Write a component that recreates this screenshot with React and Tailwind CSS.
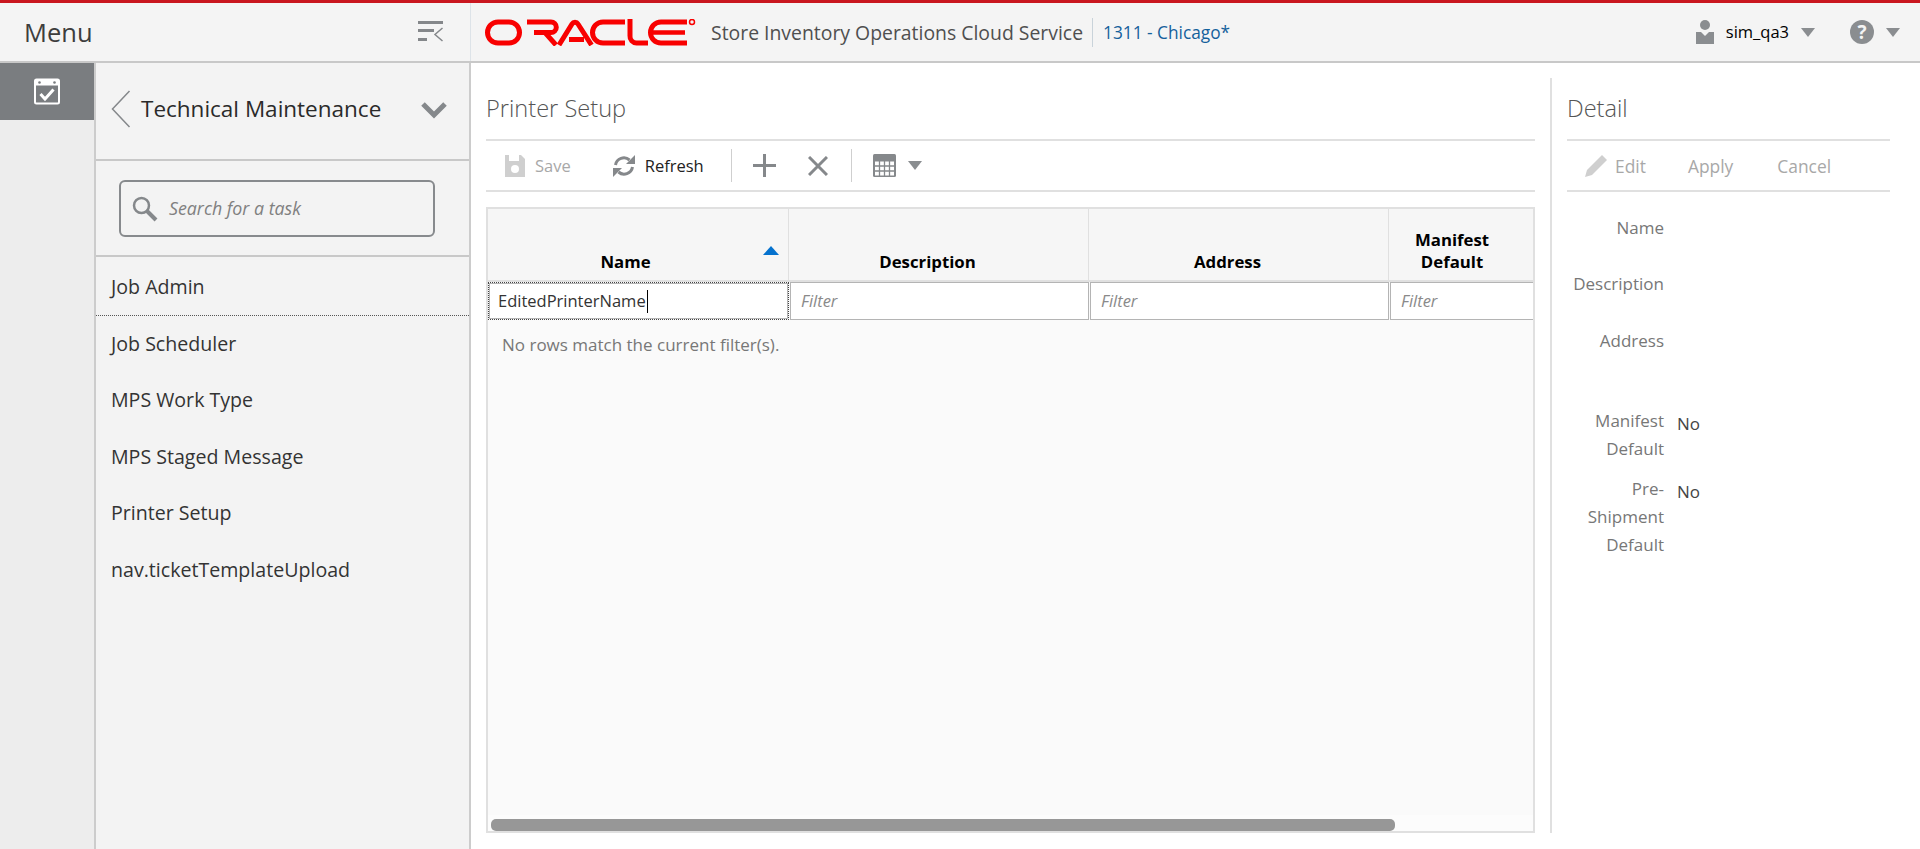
import React from 'react';

const navItems = ['Job Scheduler', 'MPS Work Type', 'MPS Staged Message', 'Printer Setup', 'nav.ticketTemplateUpload'];

const OracleLogo = () => (
    <svg width="211" height="27" viewBox="6 7 211 27" fill="none" stroke="#f80000" strokeWidth="5">
        <rect x="8.500" y="10" width="32" height="21" rx="10.500" />
        <path d="M48 10H72a5.300 5.300 0 0 1 0 10.600H55M66 20.600L77 33" />
        <path d="M80 33L93 12a3.500 3.500 0 0 1 6 0L112.500 33M90 27.500H105" />
        <path d="M146 10h-22a10.500 10.500 0 0 0 0 21h22" />
        <path d="M151 7v17a6.500 6.500 0 0 0 6.500 7H169" />
        <path d="M208 10h-26a10.500 10.500 0 0 0 0 21h26" />
        <path d="M174 20.500h32" strokeWidth="4.500" />
        <circle cx="213" cy="10" r="2.500" strokeWidth="1.500" />
    </svg>
);

const Caret = ({ className = 'w-[14px] h-[9px]', fill = '#8a8d90' }) => (
    <svg className={className} viewBox="0 0 14 9" fill={fill}>
        <path d="M0 0h14L7 9z" />
    </svg>
);

const App = () => {
    return (
        <div className="flex flex-col h-screen w-full overflow-hidden bg-white font-['Open_Sans',sans-serif]">
            <div className="h-[3px] bg-[#c9161f]" />
            <div className="flex h-[60px] bg-[#f4f4f4] border-b-2 border-[#c8c8c8]">
                <div className="flex w-[471px] items-center justify-between border-r border-[#dde3e8] pl-[24px] pr-[26px]">
                    <span className="pt-px text-[25.500px] text-[#3d3d3d]">Menu</span>
                    <svg width="26" height="24" viewBox="0 0 26 24" fill="#84878a">
                        <rect x="0" y="1" width="25" height="3" />
                        <rect x="0" y="9" width="16" height="3" />
                        <rect x="0" y="18" width="9" height="3" />
                        <path d="M24.500 8L17 14.500L24.500 21" fill="none" stroke="#84878a" strokeWidth="1.500" />
                    </svg>
                </div>
                <div className="flex flex-1 items-center pl-[14px] pr-[20px]">
                    <OracleLogo />
                    <span className="ml-[15px] pt-px text-[19.400px] text-[#4f4f4f]">Store Inventory Operations Cloud Service</span>
                    <div className="ml-[9px] h-[29px] w-px bg-[#c9d3da]" />
                    <span className="ml-[10px] pt-px text-[17.300px] text-[#14619c]">1311 - Chicago*</span>
                    <div className="flex-1" />
                    <svg width="18" height="24" viewBox="0 0 18 24" fill="#8a8d90">
                        <circle cx="9" cy="5" r="5" />
                        <path d="M0 12h5l4 4 4-4h5v12H0z" />
                    </svg>
                    <span className="ml-[12px] pt-px text-[16.500px] text-black">sim_qa3</span>
                    <Caret className="ml-[12px] w-[14px] h-[9px]" />
                    <span className="ml-[35px] flex h-[24px] w-[24px] items-center justify-center rounded-full bg-[#8a8d90] text-[19px] leading-none font-bold text-[#f4f4f4]">?</span>
                    <Caret className="ml-[12px] w-[14px] h-[9px]" />
                </div>
            </div>

            <div className="flex flex-1 min-h-0">
                <div className="w-[96px] shrink-0 bg-[#ededed] border-r-2 border-[#cccccc] box-border">
                    <div className="flex h-[57px] justify-center bg-[#7a7d80] pt-[15px]">
                        <svg width="26" height="27" viewBox="0 0 26 27" fill="none">
                            <rect x="1" y="1.500" width="24" height="24" rx="1.500" stroke="#fff" strokeWidth="2" />
                            <rect x="1" y="1.500" width="24" height="6" fill="#fff" />
                            <circle cx="5.500" cy="4.500" r="1.300" fill="#7a7d80" />
                            <circle cx="20.500" cy="4.500" r="1.300" fill="#7a7d80" />
                            <path d="M6.500 16l4.500 5 8.500-9.500" stroke="#fff" strokeWidth="3" />
                        </svg>
                    </div>
                </div>

                <div className="w-[375px] shrink-0 bg-[#f3f3f3] border-r-2 border-[#cccccc]">
                    <div className="relative flex h-[98px] items-center border-b-2 border-[#c8c8c8] pb-[4px]">
                        <svg className="ml-[15px]" width="20" height="38" viewBox="0 0 20 38" fill="none" stroke="#85888b" strokeWidth="1.500">
                            <path d="M18.500 1L1.500 19l17 18" />
                        </svg>
                        <span className="ml-[10px] text-[22.500px] text-[#2a2a2a]">Technical Maintenance</span>
                        <svg className="absolute left-[325px] top-[39px]" width="26" height="17" viewBox="0 0 26 17" fill="none" stroke="#85888b" strokeWidth="5">
                            <path d="M2 2l11 11L24 2" />
                        </svg>
                    </div>
                    <div className="border-b-2 border-[#c8c8c8] px-[23px] pt-[19px] pb-[18px]">
                        <div className="flex h-[57px] w-[316px] items-center rounded-[6px] border-2 border-[#878a8d] pl-[11px]">
                            <svg width="26" height="26" viewBox="0 0 26 26" fill="none" stroke="#85888b">
                                <circle cx="9.500" cy="9.500" r="7.500" strokeWidth="2.500" />
                                <path d="M15 15l9 9" strokeWidth="4" />
                            </svg>
                            <span className="ml-[11px] text-[17.800px] italic text-[#808080]">Search for a task</span>
                        </div>
                    </div>
                    <div className="flex h-[59px] items-center border-b border-dotted border-[#555555] pl-[15px] pt-px text-[19.600px] text-[#333333]">Job Admin</div>
                    {navItems.map((item) => (
                        <div key={item} className="flex h-[56.600px] items-center pb-[2px] pl-[15px] text-[19.600px] text-[#333333]">{item}</div>
                    ))}
                </div>

                <div className="flex flex-1 min-w-0 pl-[15px]">
                    <div className="mt-[15px] w-[1049px] shrink-0">
                        <div className="flex h-[63px] items-center border-b-2 border-[#e0e0e0] pt-px text-[23.600px] font-light text-[#555555]">Printer Setup</div>
                        <div className="flex h-[51px] items-center border-b-2 border-[#e0e0e0] text-[16.500px]">
                            <svg className="ml-[19px]" width="20" height="22" viewBox="0 0 20 22">
                                <path d="M0 0h16l4 4v18H0z" fill="#cfcfcf" />
                                <rect x="4" y="0" width="10" height="6" fill="#fff" />
                                <circle cx="10" cy="14" r="4" fill="#fff" />
                            </svg>
                            <span className="ml-[10px] pt-px text-[#a8a8a8]">Save</span>
                            <svg className="ml-[41px]" width="24" height="22" viewBox="0 0 24 22" fill="none" stroke="#85888b" strokeWidth="3">
                                <path d="M3.500 10a8.500 8.500 0 0 1 14-5" />
                                <path d="M20.500 12a8.500 8.500 0 0 1-14 5" />
                                <path d="M14 9h9V0z" fill="#85888b" stroke="none" />
                                <path d="M10 13H1v9z" fill="#85888b" stroke="none" />
                            </svg>
                            <span className="ml-[9px] pt-px text-[#222222]">Refresh</span>
                            <div className="ml-[27px] h-[33px] w-px bg-[#cfcfcf]" />
                            <svg className="ml-[21px]" width="23" height="23" viewBox="0 0 23 23" stroke="#85888b" strokeWidth="3">
                                <path d="M0 11.500h23M11.500 0v23" />
                            </svg>
                            <svg className="ml-[32px]" width="20" height="20" viewBox="0 0 20 20" stroke="#85888b" strokeWidth="3">
                                <path d="M1 1l18 18M19 1L1 19" />
                            </svg>
                            <div className="ml-[23px] h-[33px] w-px bg-[#cfcfcf]" />
                            <svg className="ml-[21px]" width="23" height="23" viewBox="0 0 23 23">
                                <rect width="23" height="23" rx="1.500" fill="#85888b" />
                                <path d="M2 7.500h19v14H2z" fill="#fff" />
                                <path d="M6.500 7v15M11.500 7v15M16.500 7v15M2 12h19M2 17h19" stroke="#85888b" strokeWidth="1.300" />
                            </svg>
                            <Caret className="ml-[12px] w-[14px] h-[9px]" />
                        </div>

                        <div className="mt-[15px] flex h-[626px] w-[1049px] flex-col border-2 border-[#e0e0e0] bg-[#fafafa]">
                            <div className="flex h-[71px] bg-[#f6f6f6] text-[16.800px] font-bold text-black">
                                <div className="relative flex w-[301px] items-end justify-center border-r border-[#e0e0e0] pb-[6px] pr-[25px]">
                                    Name
                                    <svg className="absolute right-[9px] top-[37px]" width="16" height="9" viewBox="0 0 16 9" fill="#0572ce">
                                        <path d="M8 0l8 9H0z" />
                                    </svg>
                                </div>
                                <div className="flex w-[300px] items-end justify-center border-r border-[#e0e0e0] pb-[6px] pr-[22px]">Description</div>
                                <div className="flex w-[300px] items-end justify-center border-r border-[#e0e0e0] pb-[6px] pr-[22px]">Address</div>
                                <div className="flex flex-1 items-end justify-center pb-[7px] pr-[18px] text-center leading-[22px]">Manifest<br />Default</div>
                            </div>
                            <div className="flex h-[41px] items-stretch border-t-2 border-[#e0e0e0] pb-px text-[16.500px] italic text-[#8a8a8a]">
                                <div className="mx-px my-px flex w-[299px] items-center border border-[#b4b4b4] bg-white outline-1 outline-dotted outline-[#444444] pl-[8px] not-italic text-[#333333]">
                                    EditedPrinterName<span className="ml-px h-[23px] w-px bg-black" />
                                </div>
                                <div className="ml-px flex w-[299px] items-center border border-[#b4b4b4] bg-white pl-[10px]">Filter</div>
                                <div className="ml-px flex w-[299px] items-center border border-[#b4b4b4] bg-white pl-[10px]">Filter</div>
                                <div className="ml-px flex flex-1 items-center border-y border-l border-[#b4b4b4] bg-white pl-[10px]">Filter</div>
                            </div>
                            <div className="flex-1 pl-[14px] pt-[11px] text-[17px] text-[#777777]">No rows match the current filter(s).</div>
                            <div className="flex h-[16px] items-end bg-[#fcfcfc] pl-[3px]">
                                <div className="h-[12px] w-[904px] rounded-[5px] bg-[#979797]" />
                            </div>
                        </div>
                    </div>

                    <div className="ml-[15px] mt-[15px] h-[755px] w-[340px] shrink-0 border-l-2 border-[#e0e0e0] pl-[15px]">
                        <div className="flex h-[63px] w-[323px] items-center border-b-2 border-[#e0e0e0] pt-px text-[23.600px] font-light text-[#555555]">Detail</div>
                        <div className="flex h-[51px] w-[323px] items-center border-b-2 border-[#e0e0e0] text-[17.400px] text-[#a8a8a8]">
                            <svg className="ml-[18px]" width="22" height="22" viewBox="0 0 22 22" fill="#cfcfcf">
                                <path d="M17 0l5 5L7 20l-7 2 2-7z" />
                            </svg>
                            <span className="ml-[8px] pt-px">Edit</span>
                            <span className="ml-[42px] pt-px">Apply</span>
                            <span className="ml-[44px] pt-px">Cancel</span>
                        </div>
                        <div className="flex flex-col text-[17px] leading-[28px] text-[#777777]">
                            <div className="mt-[22px] w-[97px] text-right">Name</div>
                            <div className="mt-[28px] w-[97px] text-right">Description</div>
                            <div className="mt-[29px] w-[97px] text-right">Address</div>
                            <div className="mt-[52px] flex">
                                <div className="w-[97px] text-right">Manifest Default</div>
                                <div className="ml-[13px] pt-[3px] text-[#444444]">No</div>
                            </div>
                            <div className="mt-[12px] flex">
                                <div className="w-[97px] text-right">Pre-Shipment Default</div>
                                <div className="ml-[13px] pt-[3px] text-[#444444]">No</div>
                            </div>
                        </div>
                    </div>
                </div>
            </div>
        </div>
    );
};

export default App;
